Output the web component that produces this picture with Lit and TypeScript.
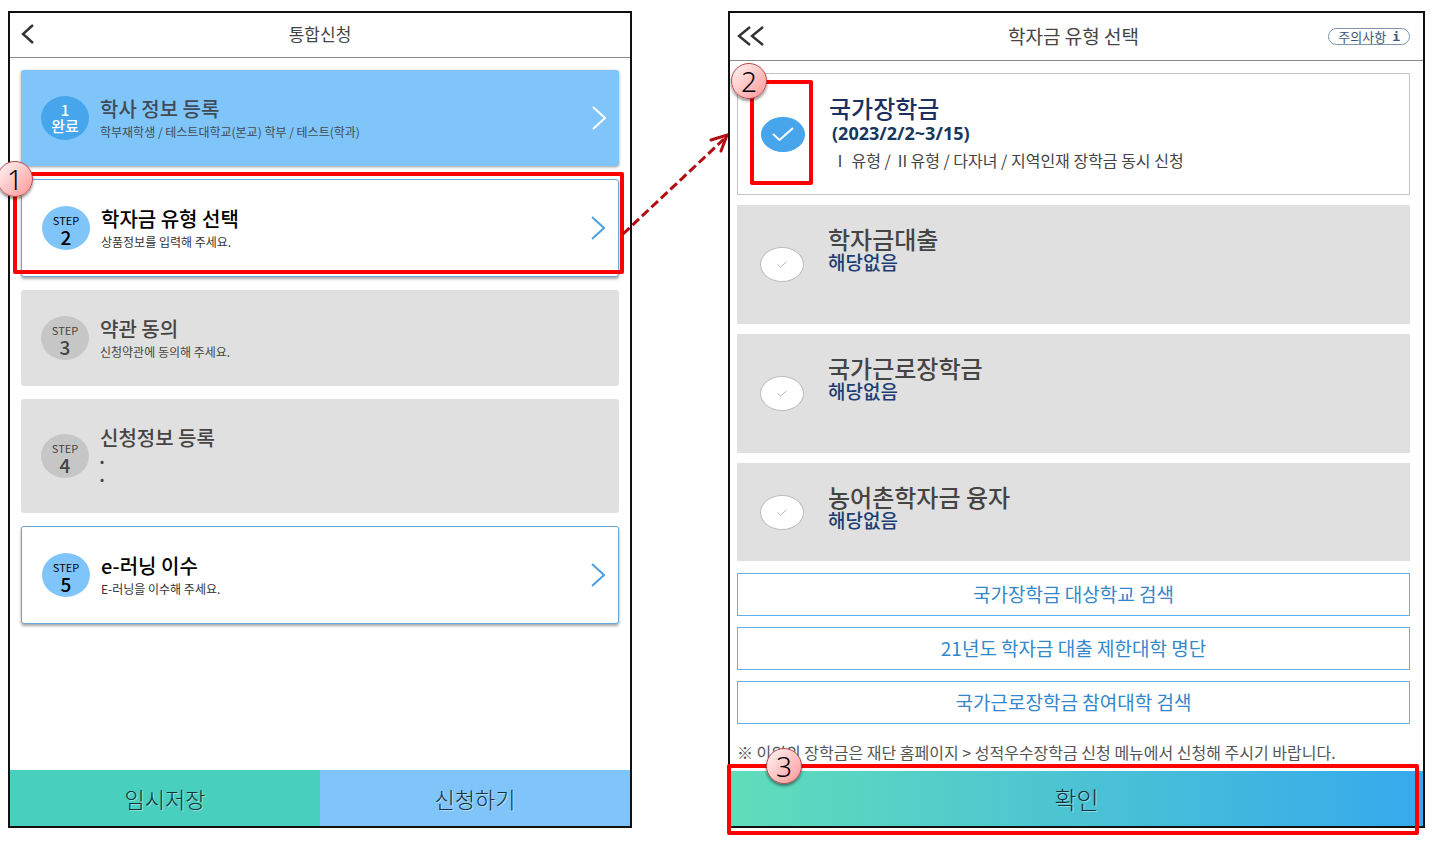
import { LitElement, html, css, svg, nothing } from "lit";
import { customElement, property } from "lit/decorators.js";
import { classMap } from "lit/directives/class-map.js";

type StepState = "done" | "active" | "idle";

interface Step {
  badge: [string, string];
  title: string;
  lines: string[];
  state: StepState;
  callout?: string;
}

interface Aid {
  id: string;
  title: string;
  period?: string;
  note: string;
  selected?: boolean;
  compact?: boolean;
}

const STEPS: Step[] = [
  {
    badge: ["1", "완료"],
    title: "학사 정보 등록",
    lines: ["학부재학생 / 테스트대학교(본교) 학부 / 테스트(학과)"],
    state: "done",
  },
  {
    badge: ["STEP", "2"],
    title: "학자금 유형 선택",
    lines: ["상품정보를 입력해 주세요."],
    state: "active",
    callout: "1",
  },
  { badge: ["STEP", "3"], title: "약관 동의", lines: ["신청약관에 동의해 주세요."], state: "idle" },
  { badge: ["STEP", "4"], title: "신청정보 등록", lines: ["•", "•"], state: "idle" },
  { badge: ["STEP", "5"], title: "e-러닝 이수", lines: ["E-러닝을 이수해 주세요."], state: "active" },
];

const AIDS: Aid[] = [
  {
    id: "national",
    title: "국가장학금",
    period: "(2023/2/2~3/15)",
    note: "Ⅰ 유형 / Ⅱ유형 / 다자녀 / 지역인재 장학금 동시 신청",
    selected: true,
  },
  { id: "loan", title: "학자금대출", note: "해당없음" },
  { id: "work", title: "국가근로장학금", note: "해당없음" },
  { id: "rural", title: "농어촌학자금 융자", note: "해당없음", compact: true },
];

const LINKS = ["국가장학금 대상학교 검색", "21년도 학자금 대출 제한대학 명단", "국가근로장학금 참여대학 검색"];

const base = css`
  *,
  *::before,
  *::after {
    box-sizing: border-box;
  }
  button {
    font: inherit;
    color: inherit;
    margin: 0;
    padding: 0;
    border: 0;
    background: none;
    cursor: pointer;
  }
  h1,
  h2,
  p {
    margin: 0;
    font-weight: inherit;
    font-size: inherit;
  }
  svg {
    display: block;
  }
`;

@customElement("callout-number")
export class CalloutNumber extends LitElement {
  @property() value = "";

  static styles = css`
    :host {
      display: grid;
      place-items: center;
      box-sizing: border-box;
      width: 36px;
      height: 36px;
      border: 1px solid #b8474b;
      border-radius: 50%;
      background: linear-gradient(135deg, #fff2f2 5%, #ffc6c6 50%, #ff9c9c 95%);
      box-shadow: 0 2px 3px rgba(0, 0, 0, 0.45);
      color: #000;
      font: 300 28px/34px "Noto Sans", "Open Sans", sans-serif;
    }
  `;

  render() {
    return html`${this.value}`;
  }
}

@customElement("step-card")
export class StepCard extends LitElement {
  @property({ attribute: false }) step!: Step;

  static styles = [
    base,
    css`
      :host {
        display: block;
        position: relative;
      }
      .card {
        display: flex;
        align-items: center;
        gap: 11px;
        width: 100%;
        padding: 25px 13px 25px 20px;
        border-radius: 3px;
        text-align: left;
        color: #444;
        background: #e0e0e0;
      }
      .done {
        background: #80c5f9;
        color: #3f4c57;
        box-shadow: 0 1px 3px rgba(0, 0, 0, 0.4);
      }
      .active {
        background: #fff;
        border: 1px solid #64a8de;
        color: #000;
        box-shadow: 0 2px 3px rgba(0, 0, 0, 0.35);
      }
      .badge {
        flex: none;
        display: flex;
        flex-direction: column;
        align-items: center;
        justify-content: center;
        width: 48px;
        height: 44px;
        border-radius: 50%;
        background: #c6c6c6;
      }
      .small {
        padding-top: 4px;
        font-size: 11px;
        line-height: 14px;
      }
      .large {
        font-size: 19px;
        line-height: 20px;
        font-weight: 500;
      }
      .active .badge {
        background: #80c5f9;
      }
      .done .badge {
        background: #47a5ec;
        color: #fff;
      }
      .done .small,
      .done .large {
        padding: 0;
        font-size: 15px;
        line-height: 16px;
        font-weight: 500;
      }
      .text {
        flex: 1;
      }
      .title {
        display: block;
        font-size: 20px;
        line-height: 28px;
        font-weight: 500;
      }
      .line {
        display: block;
        font-size: 12px;
        line-height: 18px;
      }
      .active .line {
        color: #333;
      }
      .chevron {
        flex: none;
        fill: none;
        stroke: #4b9fe0;
        stroke-width: 2;
      }
      .done .chevron {
        stroke: #fff;
      }
      .frame {
        position: absolute;
        inset: -7px -5px 3px -8px;
        border: 4px solid #f00;
        border-radius: 2px;
        pointer-events: none;
      }
      .number {
        position: absolute;
        top: -18px;
        left: -24px;
      }
    `,
  ];

  render() {
    const { badge, title, lines, state, callout } = this.step;
    return html`
      <button
        class=${classMap({ card: true, done: state === "done", active: state === "active" })}
        type="button"
        ?disabled=${state === "idle"}
      >
        <span class="badge"><span class="small">${badge[0]}</span><span class="large">${badge[1]}</span></span>
        <span class="text">
          <span class="title">${title}</span>
          ${lines.map((line) => html`<span class="line">${line}</span>`)}
        </span>
        ${state === "idle"
          ? nothing
          : html`<svg class="chevron" width="14" height="24" viewBox="0 0 14 24" aria-hidden="true">
              <path d="M1 1 L13 12 L1 23" />
            </svg>`}
      </button>
      ${callout
        ? html`<div class="frame"></div>
            <callout-number class="number" value=${callout}></callout-number>`
        : nothing}
    `;
  }
}

@customElement("aid-option")
export class AidOption extends LitElement {
  @property({ attribute: false }) aid!: Aid;

  static styles = [
    base,
    css`
      :host {
        display: block;
      }
      .option {
        display: flex;
        gap: 24px;
        position: relative;
        min-height: 119px;
        padding: 0 23px;
        background: #e0e0e0;
        color: #444;
      }
      .compact {
        min-height: 98px;
      }
      .selected {
        min-height: 122px;
        background: #fff;
        border: 1px solid #c4c4c4;
      }
      .mark {
        flex: none;
        align-self: center;
        display: grid;
        place-items: center;
        position: relative;
      }
      .box,
      .tick {
        grid-area: 1 / 1;
      }
      .box {
        appearance: none;
        width: 44px;
        height: 35px;
        margin: 0;
        border: 1px solid #bdbdbd;
        border-radius: 50%;
        background: #fff;
      }
      .box:checked {
        border-color: #47a5ec;
        background: #47a5ec;
      }
      .tick {
        position: relative;
        pointer-events: none;
        fill: none;
        stroke: #b5b5b5;
        stroke-width: 1;
      }
      .selected .tick {
        stroke: #fff;
        stroke-width: 2;
      }
      .text {
        padding-top: 20px;
      }
      .title {
        font-size: 24px;
        line-height: 28px;
        font-weight: 500;
      }
      .status {
        color: #1d3d74;
        font-size: 19px;
        line-height: 18px;
        font-weight: 500;
      }
      .selected .title {
        color: #1c2f5e;
      }
      .period {
        padding: 1px 0 0 3px;
        color: #17375e;
        font: 700 18px/20px "Noto Sans", "Open Sans", sans-serif;
      }
      .detail {
        padding: 5px 0 0 3px;
        font-size: 16px;
        line-height: 24px;
      }
      .frame {
        position: absolute;
        inset: -37px -8px -33px -11px;
        border: 4px solid #f00;
        border-radius: 2px;
        pointer-events: none;
      }
      .number {
        position: absolute;
        top: -11px;
        left: -7px;
      }
    `,
  ];

  render() {
    const { id, title, period, note, selected = false, compact = false } = this.aid;
    return html`
      <label class=${classMap({ option: true, selected, compact })} for=${id}>
        <span class="mark">
          <input class="box" id=${id} type="checkbox" ?checked=${selected} ?disabled=${!selected} />
          <svg class="tick" width=${selected ? 22 : 10} height=${selected ? 14 : 7} viewBox=${selected ? "0 0 22 14" : "0 0 10 7"} aria-hidden="true">
            ${selected ? svg`<path d="M1 7 L7.5 13 L21 1" />` : svg`<path d="M.5 3.5 L3.5 6 L9.5 1" />`}
          </svg>
          ${selected ? html`<span class="frame"></span>` : nothing}
        </span>
        <div class="text">
          <p class="title">${title}</p>
          ${period
            ? html`<p class="period">${period}</p>
                <p class="detail">${note}</p>`
            : html`<p class="status">${note}</p>`}
        </div>
        ${selected ? html`<callout-number class="number" value="2"></callout-number>` : nothing}
      </label>
    `;
  }
}

@customElement("app-root")
export class AppRoot extends LitElement {
  static styles = [
    base,
    css`
      :host {
        display: grid;
        grid-template-columns: minmax(0, 624fr) minmax(0, 697fr);
        gap: 96px;
        box-sizing: border-box;
        min-height: 100vh;
        padding: 11px 12px 15px 8px;
        overflow: hidden;
        background: #fff;
        color: #444;
        font-family: "Noto Sans CJK KR", "Noto Sans", sans-serif;
      }
      .panel {
        display: flex;
        flex-direction: column;
        position: relative;
        border: 2px solid #111;
      }
      .bar {
        display: grid;
        grid-template-columns: 1fr auto 1fr;
        align-items: center;
        height: 45px;
        padding: 0 11px 2px;
        border-bottom: 1px solid #8a8a8a;
      }
      .bar-wide {
        height: 48px;
        padding: 0 13px 1px 7px;
      }
      .heading {
        font-size: 17px;
        line-height: 24px;
      }
      .bar-wide .heading {
        font-size: 19px;
      }
      .back {
        justify-self: start;
      }
      .back svg {
        fill: none;
        stroke: #333;
        stroke-width: 2.4;
      }
      .caution {
        justify-self: end;
        display: flex;
        align-items: center;
        gap: 6px;
        height: 17px;
        padding: 0 9px;
        border: 1px solid #7f93ad;
        border-radius: 9px;
        color: #3d5578;
        font-size: 13px;
        line-height: 15px;
      }
      .info {
        font: bold 13px/15px "DejaVu Sans Mono", monospace;
      }
      .steps {
        display: flex;
        flex-direction: column;
        gap: 13px;
        padding: 12px 11px;
      }
      .options {
        display: flex;
        flex-direction: column;
        gap: 10px;
        padding: 12px 13px 12px 7px;
      }
      .links {
        display: flex;
        flex-direction: column;
        gap: 11px;
        padding: 0 13px 0 7px;
      }
      .link {
        height: 43px;
        padding-bottom: 2px;
        border: 1px solid #64b0ec;
        color: #3487cb;
        font-size: 19px;
        line-height: 24px;
      }
      .notice {
        padding: 16px 0 7px 7px;
        color: #555;
        font-size: 16px;
        line-height: 24px;
      }
      .actions {
        display: flex;
        position: relative;
        margin-top: auto;
      }
      .action {
        flex: 1;
        height: 56px;
        color: #17303a;
        font-size: 22px;
        font-weight: 300;
        text-shadow: 1px 1px 0 rgba(255, 255, 255, 0.4);
      }
      .save {
        background: #48cfbe;
      }
      .apply {
        background: #80c5f9;
      }
      .confirm {
        height: 55px;
        background: linear-gradient(90deg, #60ddba, #36a9ed);
        font-size: 24px;
      }
      .frame {
        position: absolute;
        inset: -7px 4px -9px -3px;
        border: 4px solid #f00;
        border-radius: 2px;
        pointer-events: none;
      }
      .number {
        position: absolute;
        top: -23px;
        left: 36px;
      }
      .arrow {
        position: absolute;
        top: 114px;
        left: calc(100% - 10px);
        fill: none;
        stroke: #b30d12;
        stroke-width: 3;
        pointer-events: none;
      }
    `,
  ];

  render() {
    return html`
      <section class="panel">
        <header class="bar">
          <button class="back" type="button" aria-label="이전">
            <svg width="14" height="20" viewBox="0 0 14 20"><path d="M12 1 L2 10 L12 19" /></svg>
          </button>
          <h1 class="heading">통합신청</h1>
        </header>
        <div class="steps">${STEPS.map((step) => html`<step-card .step=${step}></step-card>`)}</div>
        <footer class="actions">
          <button class="action save" type="button">임시저장</button>
          <button class="action apply" type="button">신청하기</button>
        </footer>
        <svg class="arrow" width="112" height="114" viewBox="0 0 112 114" aria-hidden="true">
          <path d="M3 107 L104 12" stroke-dasharray="9 4" />
          <path d="M91 13 L107 8 L101 24" stroke-linecap="round" />
        </svg>
      </section>

      <section class="panel">
        <header class="bar bar-wide">
          <button class="back" type="button" aria-label="처음으로">
            <svg width="27" height="20" viewBox="0 0 27 20">
              <path d="M13 1 L2 10 L13 19 M26 1 L15 10 L26 19" />
            </svg>
          </button>
          <h2 class="heading">학자금 유형 선택</h2>
          <button class="caution" type="button">주의사항<span class="info">i</span></button>
        </header>
        <div class="options">${AIDS.map((aid) => html`<aid-option .aid=${aid}></aid-option>`)}</div>
        <div class="links">${LINKS.map((text) => html`<button class="link" type="button">${text}</button>`)}</div>
        <p class="notice">※ 이외의 장학금은 재단 홈페이지 &gt; 성적우수장학금 신청 메뉴에서 신청해 주시기 바랍니다.</p>
        <footer class="actions">
          <button class="action confirm" type="button">확인</button>
          <div class="frame"></div>
          <callout-number class="number" value="3"></callout-number>
        </footer>
      </section>
    `;
  }
}
